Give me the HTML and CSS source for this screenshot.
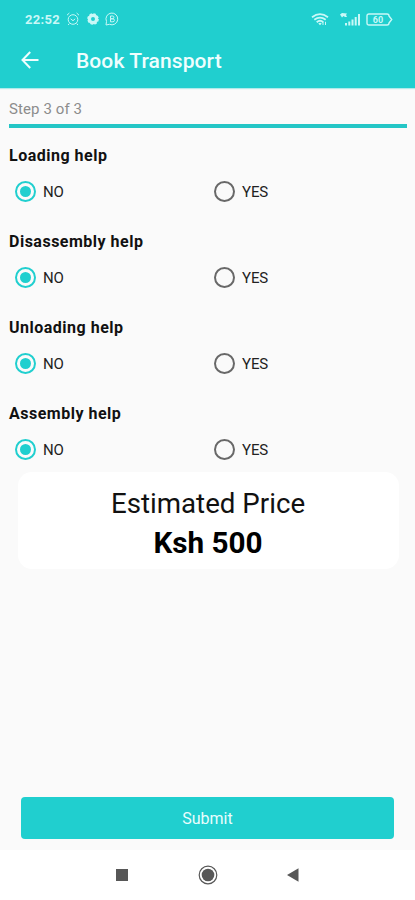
FILE: index.html
```html
<!DOCTYPE html>
<html lang="en">
<head>
    <meta charset="UTF-8">
    <meta name="viewport" content="width=device-width, initial-scale=1">
    <title>Book Transport</title>
    <link rel="stylesheet" href="styles.css">
</head>
<body>
    <header class="header">
        <div class="status-bar">
            <span class="time">22:52</span>
            <svg class="alarm" width="14" height="14" viewBox="0 0 14 14" fill="none" stroke="currentColor">
                <circle cx="7" cy="7.5" r="4.8"/>
                <path d="M1 3.2 3.4 1M13 3.2 10.6 1M4.6 6.8 7 8.7 9.2 6.8M3.3 11.5 2.2 13M10.7 11.5 11.8 13"/>
            </svg>
            <svg class="gear" width="12" height="12" viewBox="0 0 12 12" fill="none" stroke="currentColor">
                <circle cx="6" cy="6" r="3.6" stroke-width="3.2"/>
                <circle cx="6" cy="6" r="5" stroke-width="1.6" stroke-dasharray="2.4 1.5"/>
            </svg>
            <svg class="chat" width="14" height="14" viewBox="0 0 14 14" fill="none" stroke="currentColor">
                <path d="M1 13 1.5 9.4A5.9 5.9 0 1 1 4.4 12.3Z"/>
                <path d="M5.5 4h2a1.3 1.3 0 0 1 0 2.8h-2zM5.5 6.8h2.4a1.4 1.4 0 0 1 0 3H5.5z"/>
            </svg>
            <span class="spacer"></span>
            <svg class="wifi" width="18" height="13" viewBox="0 0 18 13" fill="none" stroke="currentColor">
                <path d="M1 4.2Q9-1.8 17 4.2" stroke-width="1.8"/>
                <path d="M3.3 6.8Q9 2.4 14.7 6.8" stroke-width="1.8"/>
                <path d="M5.7 9.2Q9 6.4 12.3 9.2" stroke-width="1.8"/>
                <path d="M7.3 10.4 9 12.3 10.7 10.4Q9 9.3 7.3 10.4Z" fill="currentColor" stroke="none"/>
                <path d="M12 12V8.8M14.5 8.8V12" stroke-width="1"/>
            </svg>
            <svg class="signal" width="21" height="13" viewBox="0 0 21 13" fill="currentColor">
                <path d="M0 1.5 2 0 7 .5 6 2 7 4H5L3.5 3 2 4.5 1 3ZM5 10h2v2.5H5zM8.3 8.5h2v4h-2zM11.5 6.5h2v6h-2zM14.7 4h2v8.5h-2zM18 1h2v11.5h-2z"/>
            </svg>
            <svg class="battery" width="27" height="13" viewBox="0 0 27 13">
                <path d="M3 1h18q2 0 2 2l2.7 3.5L23 10q0 2-2 2H3q-2 0-2-2V3q0-2 2-2Z" fill="none" stroke="currentColor" stroke-width="1.4"/>
                <text class="battery-level" x="12" y="9.7" text-anchor="middle">60</text>
            </svg>
        </div>
        <div class="toolbar">
            <svg class="back" width="18" height="18" viewBox="0 0 18 18" fill="none" stroke="currentColor" stroke-width="2">
                <path d="M9.2 1 1.5 9l7.7 8M1.5 9H17.5"/>
            </svg>
            <h1 class="title">Book Transport</h1>
        </div>
    </header>

    <main class="content">
        <p class="step">Step 3 of 3</p>
        <div class="progress"></div>

        <section class="question">
            <h2>Loading help</h2>
            <div class="options">
                <label><span class="radio checked"></span>NO</label>
                <label><span class="radio"></span>YES</label>
            </div>
        </section>
        <section class="question">
            <h2>Disassembly help</h2>
            <div class="options">
                <label><span class="radio checked"></span>NO</label>
                <label><span class="radio"></span>YES</label>
            </div>
        </section>
        <section class="question">
            <h2>Unloading help</h2>
            <div class="options">
                <label><span class="radio checked"></span>NO</label>
                <label><span class="radio"></span>YES</label>
            </div>
        </section>
        <section class="question">
            <h2>Assembly help</h2>
            <div class="options">
                <label><span class="radio checked"></span>NO</label>
                <label><span class="radio"></span>YES</label>
            </div>
        </section>

        <div class="price-card">
            <div class="price-label">Estimated Price</div>
            <div class="price">Ksh 500</div>
        </div>

        <button class="submit">Submit</button>
    </main>

    <nav class="nav-bar">
        <svg width="20" height="20" viewBox="0 0 20 20" fill="currentColor">
            <path d="M4 4h12v12H4z"/>
        </svg>
        <svg width="20" height="20" viewBox="0 0 20 20" fill="currentColor">
            <circle cx="10" cy="10" r="6.3"/>
            <circle cx="10" cy="10" r="8.8" fill="none" stroke="currentColor" stroke-width="1.2"/>
        </svg>
        <svg width="20" height="20" viewBox="0 0 20 20" fill="currentColor">
            <path d="M3 10 14.5 3.3v13.4z"/>
        </svg>
    </nav>
</body>
</html>
```
FILE: styles.css
```css
* {
    box-sizing: border-box;
}
body {
    margin: 0;
    height: 900px;
    display: flex;
    flex-direction: column;
    font-family: Roboto, sans-serif;
    background-color: #fafafa;
    color: #111;
}
h1, h2, p {
    margin: 0;
}
.header {
    height: 88px;
    background-color: #20cfcf;
    color: #effefe;
    box-shadow: 0 1px 1px rgba(32,207,207,0.35);
}
.status-bar {
    display: flex;
    align-items: center;
    height: 38px;
    padding: 0 22px 0 25px;
    color: #c9f8f7;
}
.time {
    width: 35px;
    margin-right: 6px;
    font-size: 13px;
    font-weight: 700;
    letter-spacing: 0.3px;
}
.gear {
    margin: 0 6px 0 7px;
}
.spacer {
    flex: 1;
}
.signal {
    margin: 0 5px 0 11px;
}
.battery-level {
    font-size: 9px;
    font-weight: 700;
    fill: currentColor;
}
.toolbar {
    display: flex;
    align-items: center;
    height: 44px;
    padding-left: 21px;
}
.title {
    margin-left: 37px;
    padding-top: 2px;
    font-size: 21px;
    font-weight: 500;
    letter-spacing: 0.1px;
}
.content {
    flex: 1;
    display: flex;
    flex-direction: column;
    padding: 0 8px 11px 9px;
}
.step {
    height: 36px;
    padding-top: 3px;
    font-size: 15px;
    line-height: 37px;
    letter-spacing: 0.1px;
    color: #8c8c8c;
}
.progress {
    height: 4px;
    background-color: #24c6c6;
}
.question {
    height: 86px;
    padding-top: 17px;
}
.question h2 {
    font-size: 16px;
    font-weight: 700;
    line-height: 22px;
    letter-spacing: 0.5px;
}
.options {
    display: grid;
    grid-template-columns: 199px 1fr;
    margin-top: 13px;
    padding-left: 6px;
}
.options label {
    display: flex;
    align-items: center;
    gap: 7px;
    height: 23px;
    font-size: 15px;
    letter-spacing: -0.1px;
    color: #222;
}
.radio {
    display: flex;
    align-items: center;
    justify-content: center;
    width: 21px;
    height: 21px;
    border: 2px solid #686868;
    border-radius: 50%;
}
.radio.checked {
    border-color: #20cfcf;
}
.radio.checked::after {
    content: "";
    width: 11px;
    height: 11px;
    border-radius: 50%;
    background-color: #20cfcf;
}
.price-card {
    height: 97px;
    margin: 0 8px 0 9px;
    padding: 13px 1px 0 0;
    border-radius: 14px;
    background-color: #fff;
    text-align: center;
}
.price-label {
    font-size: 27.7px;
    line-height: 38px;
}
.price {
    font-size: 29.7px;
    font-weight: 700;
    line-height: 39px;
    color: #000;
}
.submit {
    height: 42px;
    margin: auto 13px 0 12px;
    border: none;
    border-radius: 4px;
    background-color: #20cfcf;
    color: #e9fdfd;
    font-family: inherit;
    font-size: 16px;
}
.nav-bar {
    display: flex;
    align-items: center;
    justify-content: center;
    gap: 66px;
    height: 50px;
    background-color: #fff;
    color: #575757;
}
```
